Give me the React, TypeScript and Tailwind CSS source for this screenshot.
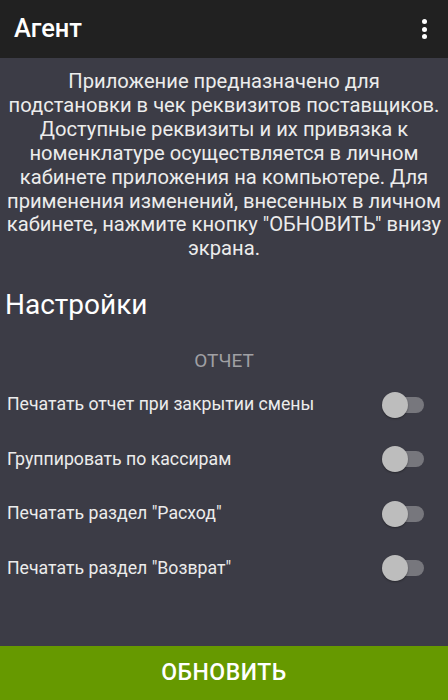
import React, { useState } from 'react';

const descLines = [
  'Приложение предназначено для',
  'подстановки в чек реквизитов поставщиков.',
  'Доступные реквизиты и их привязка к',
  'номенклатуре осуществляется в личном',
  'кабинете приложения на компьютере. Для',
  'применения изменений, внесенных в личном',
  'кабинете, нажмите кнопку "ОБНОВИТЬ" внизу',
  'экрана.',
];

const settings = [
  'Печатать отчет при закрытии смены',
  'Группировать по кассирам',
  'Печатать раздел "Расход"',
  'Печатать раздел "Возврат"',
];

function Toggle({ on, onClick }: { on: boolean; onClick: () => void }) {
  return (
    <button onClick={onClick} className="relative w-[43px] h-[26px] shrink-0">
      <span
        className={`absolute left-[3px] top-[5px] w-[39px] h-[16px] rounded-full ${
          on ? 'bg-[#4e6b1f]' : 'bg-[#77777d]'
        }`}
      />
      <span
        className={`absolute top-0 w-[26px] h-[26px] rounded-full shadow-[0_1px_2px_rgba(0,0,0,0.35)] ${
          on ? 'left-[17px] bg-[#669900]' : 'left-0 bg-[#bdbdbd]'
        }`}
      />
    </button>
  );
}

export default function App() {
  const [values, setValues] = useState<boolean[]>([false, false, false, false]);

  return (
    <div
      className="w-[448px] h-[700px] flex flex-col bg-[#3c3c46] overflow-hidden"
      style={{ fontFamily: 'Roboto, "Noto Sans", sans-serif' }}
    >
      <header className="h-[58px] shrink-0 bg-[#212121] flex items-center justify-between pl-[14px] pr-[21px]">
        <h1 className="text-[25.5px] font-medium text-white leading-none">Агент</h1>
        <div className="flex flex-col gap-[2.5px]">
          <span className="w-[5px] h-[5px] rounded-full bg-white" />
          <span className="w-[5px] h-[5px] rounded-full bg-white" />
          <span className="w-[5px] h-[5px] rounded-full bg-white" />
        </div>
      </header>

      <main className="flex-1 flex flex-col">
        <div className="pt-[12px] px-1 text-center text-[20.2px] leading-[23.9px] text-[#ececec]">
          {descLines.map((line) => (
            <div key={line} className="whitespace-nowrap">
              {line}
            </div>
          ))}
        </div>

        <h2 className="mt-[27px] pl-[5px] text-[28px] leading-[34px] text-white">Настройки</h2>

        <div className="mt-[27px] text-center text-[19px] leading-[23px] text-[#a0a0a4]">ОТЧЕТ</div>

        <div className="mt-[5px] flex flex-col">
          {settings.map((label, i) => (
            <div key={label} className="h-[54.5px] flex items-center justify-between pl-[7px] pr-[23px]">
              <span className="text-[17.7px] text-[#ececec]">{label}</span>
              <Toggle
                on={values[i]}
                onClick={() => setValues((prev) => prev.map((v, j) => (j === i ? !v : v)))}
              />
            </div>
          ))}
        </div>
      </main>

      <button className="h-[54px] shrink-0 bg-[#669900] text-white text-[23px] tracking-[0.5px] font-medium flex items-center justify-center">
        ОБНОВИТЬ
      </button>
    </div>
  );
}
